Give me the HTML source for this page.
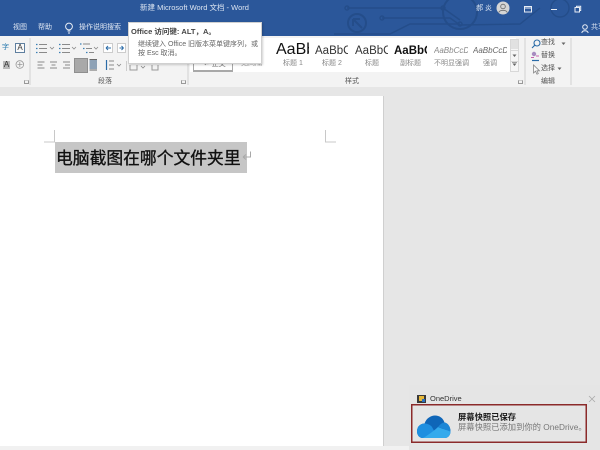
<!DOCTYPE html>
<html lang="zh">
<head>
<meta charset="utf-8">
<style>
html,body{margin:0;padding:0}
body{width:600px;height:450px;position:relative;overflow:hidden;background:#e6e6e6;font-family:"Liberation Sans","Noto Sans CJK SC",sans-serif;color:#444}
#r{position:absolute;left:0;top:0;width:600px;height:450px;overflow:hidden;filter:blur(.35px)}
.a{position:absolute;white-space:nowrap}
.t{font-size:7px;line-height:10px;color:#555}
.w{color:#dfe7f3;font-size:7px;line-height:10px}
.st{position:absolute;white-space:nowrap;overflow:hidden;font-family:"Liberation Sans",sans-serif}
.lab{position:absolute;font-size:7px;line-height:10px;color:#888;white-space:nowrap;text-align:center}
.sep{position:absolute;width:2px;background:#e2e2e2}
.g{font-size:7px;line-height:10px;color:#555}
</style>
</head>
<body>
<div id="r">
<!-- title bar -->
<div class="a" style="left:0;top:0;width:600px;height:36px;background:#2b579a"></div>
<svg class="a" style="left:330px;top:0" width="270" height="36" fill="none" stroke="#244d8a" stroke-width="1.4">
<path d="M17 8H113L130 20"/><circle cx="17" cy="8" r="2"/><circle cx="113" cy="8" r="2"/>
<circle cx="27" cy="23" r="9" stroke-width="2"/><path d="M23 19h7M23 19v7M23 19l9 9" stroke-width="2"/>
<path d="M52 18H120L130 25M130 25L190 24L210 8"/><circle cx="52" cy="18" r="2"/>
<path d="M4 34H60L80 24H130"/><circle cx="130" cy="24" r="2"/>
<circle cx="130" cy="12" r="17" stroke-width="2"/><circle cx="230" cy="8" r="9"/>
</svg>
<div class="a w" style="left:140px;top:3px;font-size:7.5px;color:#dbe4f1">新建 Microsoft Word 文档 - Word</div>
<div class="a w" style="left:13px;top:23px">视图</div>
<div class="a w" style="left:38px;top:23px">帮助</div>
<svg class="a" style="left:64px;top:22px" width="10" height="12" fill="none" stroke="#e8edf5" stroke-width="1"><circle cx="5" cy="4.5" r="3.4"/><path d="M3.500 9h3M4 11h2"/></svg>
<div class="a w" style="left:79px;top:23px">操作说明搜索</div>
<div class="a w" style="left:476px;top:4px">郝 炎</div>
<svg class="a" style="left:496px;top:1px" width="14" height="14"><circle cx="7" cy="7" r="6.5" fill="#d5d5d5"/><circle cx="7" cy="5.5" r="2.3" fill="none" stroke="#666" stroke-width=".8"/><path d="M2.800 11.500c.6-2.800 7.800-2.800 8.400 0" fill="none" stroke="#666" stroke-width=".8"/></svg>
<svg class="a" style="left:523px;top:5px" width="70" height="9" fill="none" stroke="#e8edf5" stroke-width="1"><rect x="1.500" y="1.500" width="7" height="5.500"/><path d="M1.500 3h7"/><path d="M28 4.500h6"/><rect x="52" y="2.500" width="4.500" height="4.500"/><path d="M53.500 2.500V1.300h4.200v4.200h-1.200"/></svg>
<svg class="a" style="left:581px;top:24px" width="9" height="10" fill="none" stroke="#e8edf5" stroke-width="1"><circle cx="4" cy="3" r="2.300"/><path d="M.8 9c.5-3 5.700-3 6.400 0"/></svg>
<div class="a w" style="left:591px;top:23px">共享</div>

<!-- ribbon -->
<div class="a" style="left:0;top:36px;width:600px;height:51px;background:#f3f3f3"></div>
<div class="a" style="left:0;top:87px;width:600px;height:9px;background:#e6e6e6"></div>
<div class="sep" style="left:29px;top:38px;height:47px"></div>
<div class="sep" style="left:187px;top:38px;height:47px"></div>
<div class="sep" style="left:524px;top:38px;height:47px"></div>
<div class="sep" style="left:570px;top:38px;height:47px"></div>

<!-- left font controls -->
<div class="a" style="left:2px;top:43px;font-size:7px;line-height:10px;color:#2c7cb0">字</div>
<div class="a" style="left:15px;top:43px;width:8px;height:8px;border:1px solid #5f7f9f;font-size:8px;line-height:8px;text-align:center;color:#333;background:#fafafa">A</div>
<div class="a" style="left:3px;top:61px;width:7px;height:8px;background:#b8b8b8;font-size:8px;line-height:8px;text-align:center;color:#333">A</div>
<svg class="a" style="left:15px;top:59px" width="10" height="12" fill="none" stroke="#999" stroke-width=".8"><circle cx="4.800" cy="5.500" r="3.800"/><path d="M2.500 5.500h5M4.800 3v5"/></svg>
<div class="a" style="left:24px;top:80px;width:3px;height:2px;border:1px solid #999;border-top-color:#ccc"></div>

<!-- paragraph icons -->
<svg class="a" style="left:34px;top:40px" width="100" height="32" fill="none" stroke="#8a8a8a" stroke-width="1">
<path d="M5 4.500h8M5 8.500h8M5 12.500h8"/><path d="M2 4.500h1.500M2 8.500h1.500M2 12.500h1.500" stroke="#3a7fb5" stroke-width="1.200"/>
<path d="M16 7l2 2 2-2" stroke-width=".8"/>
<path d="M28 4.500h8M28 8.500h8M28 12.500h8"/><path d="M25 4.500h1.500M25 8.500h1.500M25 12.500h1.500" stroke="#3a7fb5" stroke-width="1.200"/>
<path d="M38 7l2 2 2-2" stroke-width=".8"/>
<path d="M49 4h7M52 8.500h6M55 12.500h5"/><path d="M46 4h1.500M49 8.500h1.500M52 12.500h1.500" stroke="#3a7fb5" stroke-width="1.200"/>
<path d="M60 7l2 2 2-2" stroke-width=".8"/>
<rect x="69.500" y="3.500" width="9" height="9" fill="#fff" stroke="#ccc"/><path d="M72 8h5M72 8l2-2M72 8l2 2" stroke="#2b6ca8"/>
<rect x="83.500" y="3.500" width="8" height="9" fill="#fff" stroke="#ccc"/><path d="M89.500 8h-4M89.500 8l-2-2M89.500 8l-2 2" stroke="#2b6ca8"/>
<path d="M3.500 22h7M3.500 25h5M3.500 28h7"/><path d="M16 22h7M17.500 25h4M16 28h7"/><path d="M29 22h7M31 25h5M29 28h7"/>
</svg>
<div class="a" style="left:74px;top:58px;width:12px;height:13px;background:#a9a9a9;border:.8px solid #8f8f8f"></div>
<svg class="a" style="left:89px;top:58px" width="75" height="14" fill="none" stroke="#7f8fa0">
<rect x=".5" y="2" width="7.500" height="9" fill="#8ea2b6" stroke="none"/><path d="M.5 1.500h7.500M.5 12h7.500" stroke="#666"/>
<path d="M17.500 2v10" stroke="#2b6ca8" stroke-width="1.200"/><path d="M20 3h5M20 7h5M20 11h5" stroke="#888"/><path d="M28 6l2 2 2-2" stroke="#888" stroke-width=".8"/>
<path d="M37.500 3v10" stroke="#ccc"/>
<path d="M41 7v5h7V7" stroke="#999"/>
<path d="M52 8l2 2 2-2" stroke="#888" stroke-width=".8"/>
<path d="M63 7v5h6V7" stroke="#999"/>
</svg>
<div class="a g" style="left:98px;top:77px">段落</div>
<div class="a" style="left:181px;top:80px;width:3px;height:2px;border:1px solid #999;border-top-color:#ccc"></div>

<!-- styles gallery -->
<div class="a" style="left:190px;top:38px;width:326px;height:34px;background:#fff"></div>
<div class="a" style="left:193px;top:41px;width:38px;height:28px;border:1px solid #a8a8a8;border-bottom-width:2px;background:#fff"></div>
<div class="lab" style="left:204px;top:60px;color:#777">↵ 正文</div>
<div class="st" style="left:237px;top:45px;width:8px;font-size:9px;color:#3c6fa6;line-height:12px">Dc</div>
<div class="st" style="left:276px;top:40px;width:33px;font-size:16px;line-height:20px;color:#111">AaBb</div>
<div class="st" style="left:315px;top:44px;width:33px;font-size:11.500px;line-height:14px;color:#333">AaBbC</div>
<div class="st" style="left:355px;top:44px;width:33px;font-size:11.500px;line-height:14px;color:#333">AaBbC</div>
<div class="st" style="left:394px;top:44px;width:33px;font-size:11.500px;line-height:14px;color:#111;font-weight:bold">AaBbC</div>
<div class="st" style="left:434px;top:45px;width:34px;font-size:8px;line-height:11px;color:#888;font-style:italic">AaBbCcDd</div>
<div class="st" style="left:473px;top:45px;width:34px;font-size:8px;line-height:11px;color:#666;font-style:italic">AaBbCcDd</div>
<div class="lab" style="left:241px;top:59px;color:#999">无间隔</div>
<div class="lab" style="left:283px;top:59px">标题 1</div>
<div class="lab" style="left:322px;top:59px">标题 2</div>
<div class="lab" style="left:365px;top:59px">标题</div>
<div class="lab" style="left:400px;top:59px">副标题</div>
<div class="lab" style="left:434px;top:59px">不明显强调</div>
<div class="lab" style="left:483px;top:59px">强调</div>
<div class="a" style="left:510px;top:39px;width:9px;height:33px;background:#f6f6f6;border:1px solid #d8d8d8;box-sizing:border-box"></div>
<div class="a" style="left:511px;top:40px;width:7px;height:9px;background:#e1e1e1"></div>
<div class="a" style="left:510px;top:50px;width:9px;height:1px;background:#d8d8d8"></div>
<div class="a" style="left:510px;top:61px;width:9px;height:1px;background:#d8d8d8"></div>
<svg class="a" style="left:511px;top:53px" width="7" height="16" fill="#666"><path d="M1.500 1.500h4l-2 2.500z"/><path d="M1.500 10.500h4l-2 2.500z"/><path d="M1 9h5v.6H1z"/></svg>
<div class="a g" style="left:345px;top:77px">样式</div>
<div class="a" style="left:518px;top:80px;width:3px;height:2px;border:1px solid #999;border-top-color:#ccc"></div>

<!-- editing -->
<svg class="a" style="left:531px;top:39px" width="10" height="10" fill="none" stroke="#2b6ca8" stroke-width="1.100"><circle cx="6" cy="4" r="3"/><path d="M3.800 6.200L1 9"/></svg>
<div class="a t" style="left:541px;top:38px">查找</div>
<svg class="a" style="left:561px;top:42px" width="5" height="4" fill="#666"><path d="M.5 .5h4l-2 2.500z"/></svg>
<svg class="a" style="left:530px;top:51px" width="11" height="11"><circle cx="4" cy="3" r="2.200" fill="#a78bc0"/><path d="M1 6.500h3M6 5h3" stroke="#b39" stroke-width=".7"/><path d="M2 9.500h7" stroke="#2b6ca8" stroke-width="1.200"/></svg>
<div class="a t" style="left:541px;top:51px">替换</div>
<svg class="a" style="left:532px;top:64px" width="9" height="11" fill="#fafafa" stroke="#888" stroke-width=".8"><path d="M1.500 1v8l2-1.800 1.500 3 1.300-.6-1.400-2.800H7.500z"/></svg>
<div class="a t" style="left:541px;top:64px">选择</div>
<svg class="a" style="left:557px;top:67px" width="5" height="4" fill="#666"><path d="M.5 .5h4l-2 2.500z"/></svg>
<div class="a g" style="left:541px;top:77px">编辑</div>

<!-- tooltip -->
<div class="a" style="left:128px;top:22px;width:134px;height:42px;background:#fff;border:1px solid #d0d0d0;box-sizing:border-box;box-shadow:1px 1px 2px rgba(0,0,0,.18)"></div>
<div class="a" style="left:131px;top:26px;font-size:7.500px;line-height:11px;font-weight:bold;color:#444">Office 访问键: ALT，A。</div>
<div class="a" style="left:138px;top:39px;font-size:7px;line-height:11px;color:#666">继续键入 Office 旧版本菜单键序列，或</div>
<div class="a" style="left:138px;top:48px;font-size:7px;line-height:11px;color:#666">按 Esc 取消。</div>

<!-- page -->
<div class="a" style="left:0;top:96px;width:384px;height:350px;background:#fff;border-right:1px solid #cfcfcf;box-sizing:border-box"></div>
<div class="a" style="left:0;top:446px;width:409px;height:4px;background:#f1f1f1"></div>
<svg class="a" style="left:40px;top:128px" width="300" height="16" fill="none" stroke="#c8c8c8"><path d="M14.500 2v12H4"/><path d="M285.500 2v12H296"/></svg>
<div class="a" style="left:55px;top:142px;width:192px;height:31px;background:#c6c6c6"></div>
<div class="a" style="left:56px;top:146px;font-size:16.800px;line-height:22px;color:#111;font-family:'Noto Sans CJK SC',sans-serif;font-weight:400;-webkit-text-stroke:.35px #111">电脑截图在哪个文件夹里</div>
<svg class="a" style="left:241px;top:150px" width="11" height="11" fill="none" stroke="#a8a8a8"><path d="M9.500 1.500v5.500H2M2 7l3-2.500M2 7l3 2.500"/></svg>

<!-- notification -->
<div class="a" style="left:409px;top:385px;width:191px;height:65px;background:#e5e5e5"></div>
<div class="a" style="left:417px;top:395px;width:9px;height:8px;background:#3a3a3a"></div>
<div class="a" style="left:419px;top:396px;width:5px;height:5px;background:#e8b93a"></div>
<div class="a" style="left:422px;top:399px;width:3px;height:3px;background:#2a6fc0"></div>
<div class="a" style="left:430px;top:394px;font-size:7.500px;line-height:10px;color:#333">OneDrive</div>
<svg class="a" style="left:588px;top:395px" width="8" height="8" stroke="#aaa" stroke-width=".8"><path d="M1 1l6 6M7 1L1 7"/></svg>
<div class="a" style="left:411px;top:404px;width:176px;height:39px;border:1px solid #8b2a2a;box-sizing:border-box;box-shadow:inset 0 0 0 .5px #8b2a2a"></div>
<svg class="a" style="left:417px;top:414px" width="34" height="25">
<path d="M6 24C1.500 24 0 20 0 17.500 0 12 4 9.500 7.500 9.500 9.500 4 14 1.500 18 1.500c4.500 0 8 2.500 9.500 7 3.500.5 6 4.500 6 9 0 3.500-2.500 6.500-5.500 6.500z" fill="#0f66b8"/>
<path d="M27.500 8.500c3.500.5 6 4.500 6 9L21 13c2-2.500 4-4.500 6.500-4.500z" fill="#1c86d6"/>
<path d="M6 24C1.500 24 0 20 0 17.500 0 12 4 9.500 7.500 9.500c3 0 6 1.500 7.500 3.500l6 11z" fill="#1f8fe0"/>
<path d="M6 24c4-2 12-8 15-11 3 1.500 9 3 12.500 4.500 0 3.500-2.500 6.500-5.500 6.500z" fill="#35aaec"/>
</svg>
<div class="a" style="left:458px;top:411px;font-size:8.300px;line-height:12px;font-weight:bold;color:#1a1a1a">屏幕快照已保存</div>
<div class="a" style="left:458px;top:421px;font-size:8.300px;line-height:12px;color:#777">屏幕快照已添加到你的 OneDrive。</div>
</div>
</body>
</html>
